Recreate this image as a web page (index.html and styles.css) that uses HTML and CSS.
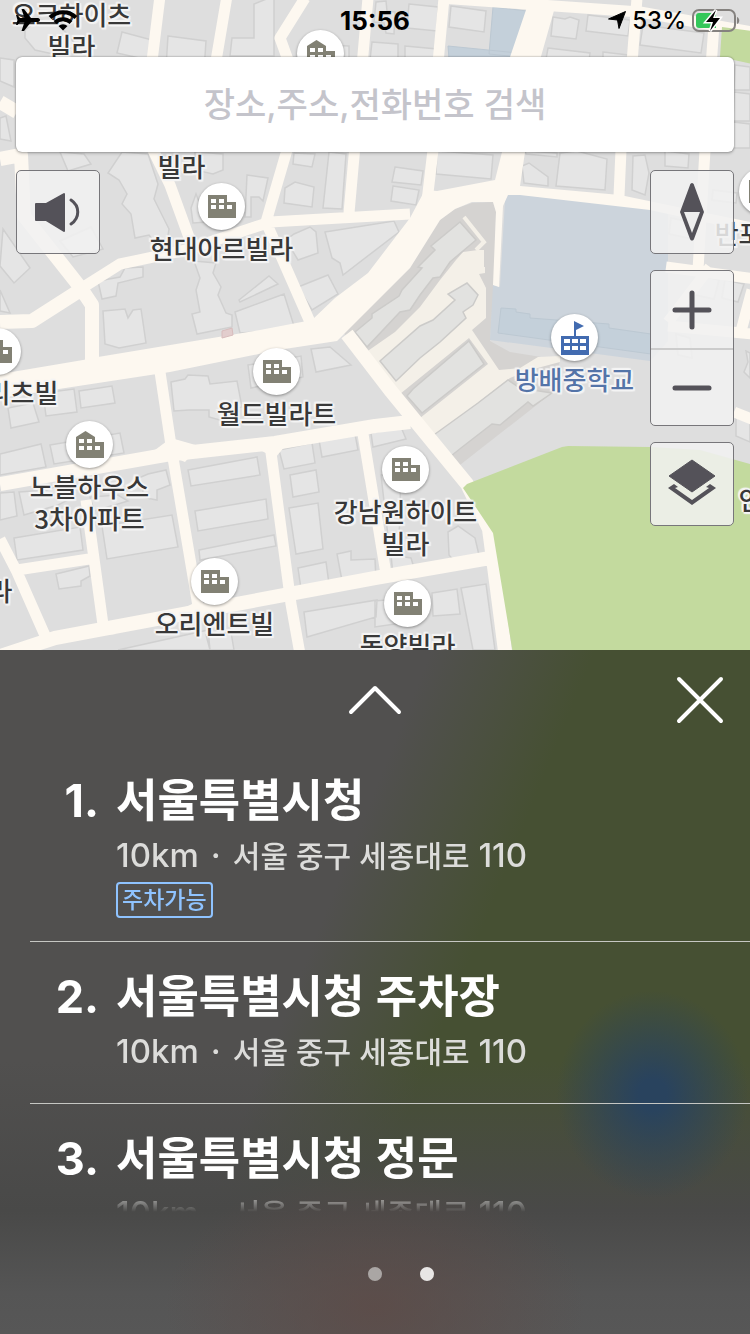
FILE: index.html
```html
<!DOCTYPE html>
<html lang="ko">
<head>
  <meta charset="UTF-8">
  <meta name="viewport" content="width=device-width, initial-scale=1.0">
  <title>장소 검색</title>
  <link rel="stylesheet" href="styles.css">
</head>
<body>
  <!-- shared symbols -->
  <svg class="sprite" width="0" height="0" aria-hidden="true">
    <symbol id="villa" viewBox="0 1 28 24">
      <path fill="#828174" d="M0 1h19v7h9v16H0z"/>
      <path fill="#fff" d="M3 5h5v4H3zM11 5h5v4h-5zM3 11h5v4H3zM11 11h5v4h-5zM19 11h5v4h-5z"/>
    </symbol>
    <symbol id="apartment" viewBox="0 0 28 27">
      <path fill="#828174" d="M0 6l9.500-6L19 6v5h9v16H0z"/>
      <path fill="#fff" d="M3 8h5v4H3zM11 8h5v4h-5zM3 15h5v4H3zM11 15h5v4h-5zM19 15h5v4h-5z"/>
    </symbol>
    <symbol id="school" viewBox="0 0 28 34">
      <path fill="#426bb0" d="M13 0l10 5-8 4v6h13v19H0V15h13z"/>
      <path fill="#fff" d="M3 18h6v4H3zM11 18h6v4h-6zM19 18h6v4h-6zM3 25h6v4H3zM11 25h6v4h-6zM19 25h6v4h-6z"/>
    </symbol>
  </svg>

  <main class="map-area">
    <svg class="map" viewBox="0 0 750 650" preserveAspectRatio="xMidYMin slice" aria-hidden="true">
      <rect width="750" height="650" fill="#dedede"/>

      <g class="buildings">
        <path d="M25 30l14-10 18 2 20 24-24 8-18-4-10-12zM122 32l30 8-4 20-31-7zM168 36l38 5-2 30-38-4zM232 38h22V4l20-8v60h-44zM304 44l45 2v14h-40zM376 2l10-1 1 10 8 1-1 22-8-1-2-10-10-1zM409 4l29 3-1 24-30-3zM372 42l26 2v16h-28zM405 46l32 3v10h-32zM451 6l35 5-2 21-35-5z"/>
        <path d="M553 17l12 2 5-2 9 3-3 19-25-3zM588 15l42 5-2 16-42-5zM548 48l42 5-1 8-43-2zM603 52l25 3v6h-25zM643 25l61 8-3 20-61-8z"/>
        <path d="M0 58l14 2v27l-14-6zM0 118l6-2 5 25-11-2zM60 152l24 2 7 10-23 7zM122 152l26 2 10 30-4 15 15 30-4 26-16-20-14 3-4-24-9-10 5-10-8-14-11-7zM195 152l28 2v16l-10 4-18-4zM247 175l21 3-5 23-4-4-8 0 0 20-6 0zM196 194l-5 14 2 15 14-1zM294 153l21 1-3 13-19-3zM285 188l10-6 19 5-2 20-28-4zM329 152l17 2-4 55-19-1z"/>
        <path d="M60 241l31-14 12 22-30 8zM3 229l27 39-16 15-14-17zM0 290l10 23-10-2zM98 281l22-4 5-9 18-1v10l-25 6-2 13-14 3zM103 311l22-2 3 9 5-8 8-1 5 34-27 5-14-4zM194 261l22 2-3 10 8 14-3 8 8 18 6 2v12l-35 7-5-20 8-2-4-22 4-12zM294 234l16-7 6 5 2 21-20 7-12-20zM239 300l30-24 9 8-21 10-17 8zM298 287l30-12 10 19-26 16zM235 312l49-18 10 32-18 5-36 2zM325 232l69-11 5 11-56 43-3-12-8-5z"/>
        <path d="M395 167l28 4-2 14-29-3zM393 186l26 4-3 15-25-4zM437 151l56 4-2 24-55-5zM525 151l32 2v4l-31-3zM522 166l7-3 19 14v9l-24-3zM560 153l17-2 30 8-2 31-49-4zM633 156l12-1 4 18-4 22-13-5z"/>
        <path d="M665 151l24 3-1 14-23-2zM735 65l15 2v23h-16zM734 92l16 2v27h-17zM733 122l17 2v24h-18zM713 190l24 3-1 10-24-3zM671 218l24 5-2 16-24-5zM699 275l20 5-5 19-19-4zM725 280l19 4-6 18-16-4zM676 334l14 4 2 20-14-3zM746 351l4 2v25l-6-6 4-10zM736 417l14 5v20l-14-6z"/>
        <path d="M8 408l25-5 6 19-28 6zM43 393l31-4 3 23-31 4zM79 391l33-5 3 17-34 5zM0 454l41-10 5 23-46 8zM50 445l70-12 4 20-70 11zM148 474l18-4 4 15-13 5v10l-16-3 3-9-10-8zM0 493l14-1 3 24-17 4zM19 492l28-2 12-5 9 15-10 5-34 10zM90 497l28-2 10 6-34 10zM14 538l66-11 3 23-66 10zM102 526l70-11 6 32-71 12zM56 574l33-8 1 10-9 5v5l-22 3z"/>
        <path d="M171 382l14-3 3-4 20 1 2 8 27-3 5 26-15 3v12l-18-5v-7h-20l-15 1zM248 365l53-9 2 21-52 11zM311 349l19-2 21 18-35 7zM188 470l69-13 3 18-69 11zM195 511l71-12 2 20-70 12zM199 550l75-15 2 11-76 14zM279 450l33-7 3 20-31 6zM319 440l36-6 3 16-36 7zM290 475l26-5 3 22-26 5zM289 508l29-5 5 46-27 5zM298 568l28-6 3 22-28 5zM337 554l14-3v9l24-1 1 22-33 5zM118 650l90-20 2 20zM304 612l73-12-1 17-69 20zM371 433l30-6 5 12-33 8zM381 475l20-4-2 70-10 4zM448 532l10-6 17 12 4 17-18 14-12-14zM391 555l20 3 4 13-22 4zM432 593l25-4 3 25-27 2zM461 588l25-4 9 66h-22zM375 601l40-4v24l-40 6zM206 635l25-3 3 18h-24z"/>
      </g>

      <!-- apartment complex -->
      <path fill="#d5d3d1" d="M344 333L410 268L440 220L455 209L472 203L493 202L496 212L494 285L490 341L510 352L560 360L552 393L451 472z"/>
      <path fill="#f4f0e8" d="M362 355L395 332L420 307L440 280L456 260L463 252L478 250L484 250V267H485V273L479 274L486 288V318L472 330L499 370L520 368L538 357L560 356V362L530 370L510 378L432 438L415 422L488 364L469 338L400 394L385 385L371 365z"/>
      <path fill="none" stroke="#f4f0e8" stroke-width="4" d="M464 217l20 25-8 8"/>
      <g class="blocks">
        <path d="M355 332L372 318V314L399 296L402 290L422 268L418 267L435 250L431 246L460 222L476 240L450 262L440 277L433 278L420 295L410 310L400 312L367 347z"/>
        <path d="M380 361L420 326L433 320L455 300L448 294L467 283L478 295L473 305L463 312L466 318L440 342L420 358L396 381z"/>
        <path d="M407 396L413 389L469 341L484 364L422 413z"/>
        <path d="M431 437L478 403L508 380L520 388L552 393L533 406L528 402L500 425L492 424L461 448L446 460z"/>
      </g>

      <!-- school grounds -->
      <path fill="#ccd4dc" d="M505 195h18l112 11 33 7v128l-18 20-160-21 3-55 7 2 5-87z"/>
      <path fill="#c4d0da" stroke="#bcc8d2" d="M501 308l15 1v3l14 2v4l79 6v4l42 6v20l-153-21zM493 7l34 4-8 46-30-3zM448 46l70 7-1 8-68-2z"/>

      <g class="roads">
        <path d="M0 374L83 360L98 357L260 330L312 320L335 298L368 273L410 218L425 190L437 191L495 180L502 152L510 57L527 7H555L540 60L525 152L520 186L620 195L750 222V232L650 210L520 195H508L503 206L499 287L493 285L496 212L493 202H472L455 209L440 220L410 268L344 334L337 341L278 350L170 372L0 398z"/>
      </g>
      <g class="lines">
        <path class="w14" d="M347 334l43 56 77 94 22 45 8 60 9 70M0 484l165-29 110-12 100-17 35-4M0 656l55-18 320-60 115-20M92 360v-55l-12-18-56-71-3-61-21 4M0 322l32-1 50-32M0 102l17 10"/>
        <path class="w12" d="M160 372l12 80 27 160M270 445l21 159 9 50M362 428l25 152M86 500l18 132M0 539l17 33 30 68M17 570l72-11M160-4l-8 65M227-4l-11 65M152 148l18 37 20 55M305-2l-25 40 8 22M287 150l-21 72 44 100M82 288l38-24 66-14 84-28 140-8M368-2l-19 215M444-2l-6 65M433 150l-7 60M621 150l-2 46M637-2l-5 65M714 25l-9 125-7 120M440-2l200 14 112 20M666 267l90 12M668 326l85 8M710 267l-42 55M752 290l-12 45M734 412l20 8"/>
      </g>
      <path class="road-fill" d="M155 450l16-12 28 8-14 16zM260 450l15 8 12-14zM184 608l12-6 12 8-12 10zM93 636l11-12 12 10z"/>

      <!-- park -->
      <path fill="#c3da9e" d="M463 488l4-4 95-37 6-1 82 1 50 3 50 14v190H513l-20-121zM722 27l30 4v33l-32-7z"/>
      <path fill="#e2cdcd" stroke="#d8bcbc" d="M222 331l10-3 1 7-11 3z"/>
    </svg>

    <div class="pin oak"><span class="label">오크하이츠<br>빌라</span></div>
    <div class="pin top-apt"><span class="marker"><svg width="28" height="27"><use href="#apartment"/></svg></span></div>
    <div class="pin villa"><span class="label">빌라</span></div>
    <div class="pin hyundai"><span class="marker"><svg width="28" height="24"><use href="#villa"/></svg></span><span class="label">현대아르빌라</span></div>
    <div class="pin ritz"><span class="marker"><svg width="28" height="24"><use href="#villa"/></svg></span></div>
    <div class="pin ritz-name"><span class="label">리츠빌</span></div>
    <div class="pin world"><span class="marker"><svg width="28" height="24"><use href="#villa"/></svg></span><span class="label">월드빌라트</span></div>
    <div class="pin noble"><span class="marker"><svg width="28" height="27"><use href="#apartment"/></svg></span><span class="label">노블하우스<br>3차아파트</span></div>
    <div class="pin gangnam"><span class="marker"><svg width="28" height="24"><use href="#villa"/></svg></span><span class="label">강남원하이트<br>빌라</span></div>
    <div class="pin orient"><span class="marker"><svg width="28" height="24"><use href="#villa"/></svg></span><span class="label">오리엔트빌</span></div>
    <div class="pin dongyang"><span class="marker"><svg width="28" height="24"><use href="#villa"/></svg></span><span class="label">동양빌라</span></div>
    <div class="pin bangbae"><span class="marker"><svg width="28" height="34"><use href="#school"/></svg></span><span class="label">방배중학교</span></div>
    <div class="pin banpo"><span class="marker"><svg width="28" height="24"><use href="#villa"/></svg></span><span class="label">반포빌라</span></div>
    <div class="pin left-name"><span class="label">라</span></div>
    <div class="pin right-name"><span class="label">인</span></div>

    <div class="overlay">
      <div class="status">
        <div class="status-left">
          <svg width="24" height="22" viewBox="0 0 24 22"><path d="M24 11c0-1.500-1.500-2-3-2h-6L8 0H5.500l3 9H4L1.500 6H0l1.500 5L0 16h1.500L4 13h4.500l-3 9H8l7-9h6c1.500 0 3-.500 3-2z"/></svg>
          <svg width="30" height="22" viewBox="0 0 30 22"><path fill="none" stroke="#000" stroke-width="4" d="M2 8.500a18.500 18.500 0 0 1 26 0M7 13.500a11.500 11.500 0 0 1 16 0"/><path d="M15 21.500l-4.500-4.500a6.500 6.500 0 0 1 9 0z"/></svg>
        </div>
        <time class="clock">15:56</time>
        <div class="status-right">
          <svg width="18" height="18" viewBox="0 0 18 18"><path d="M17.500.500L11 17.500 9.500 9 .500 8z" stroke="#000" stroke-linejoin="round"/></svg>
          <span>53%</span>
          <svg width="48" height="30" viewBox="0 0 48 30"><rect x="1" y="5" width="42" height="21" rx="6" fill="none" stroke="#85827f" stroke-width="2"/><path fill="#85827f" d="M45 12c3 1 3 6 0 7z"/><path fill="#34c759" d="M7 8h17v15H7a3 3 0 0 1-3-3v-9a3 3 0 0 1 3-3z"/><path class="bolt" d="M24 5L14 17h7l-3 9 10-13h-7z"/></svg>
        </div>
      </div>

      <form class="search">
        <input type="text" aria-label="장소 검색" placeholder="장소,주소,전화번호 검색">
      </form>

      <div class="controls">
        <button class="control" type="button" aria-label="음성 안내">
          <svg width="46" height="40" viewBox="0 0 46 40"><path fill="#545259" stroke="#545259" stroke-width="2" stroke-linejoin="round" d="M1 12h10L29 2v37L11 28H1z"/><path fill="none" stroke="#545259" stroke-width="3" stroke-linecap="round" d="M36 8c9 6 9 18 0 24"/></svg>
        </button>
        <div class="control-column">
          <button class="control" type="button" aria-label="나침반">
            <svg width="24" height="58" viewBox="0 0 24 58"><path fill="#545259" d="M12 0c1 0 2 1 2 2l10 27-10 27c-1 2-3 2-4 0L0 29 10 2c0-1 1-2 2-2z"/><path fill="#eee" d="M4 29h16l-8 21z"/></svg>
          </button>
          <div class="zoom">
            <button type="button" aria-label="확대"><svg width="40" height="40" viewBox="0 0 40 40"><path stroke="#545259" stroke-width="5" stroke-linecap="round" d="M3 20h34M20 3v34"/></svg></button>
            <button type="button" aria-label="축소"><svg width="40" height="40" viewBox="0 0 40 40"><path stroke="#545259" stroke-width="5" stroke-linecap="round" d="M3 20h34"/></svg></button>
          </div>
          <button class="control" type="button" aria-label="지도 레이어">
            <svg width="48" height="50" viewBox="0 0 48 50"><path fill="#545259" stroke="#545259" stroke-linejoin="round" d="M24 1l23 16-23 16L1 17z"/><path fill="#545259" d="M6 25L0 29l24 17 24-17-6-4-4 3 3 1-17 12L7 29l3-1z"/></svg>
          </button>
        </div>
      </div>
    </div>
  </main>

  <section class="results" aria-label="검색 결과">
    <header class="results-head">
      <button class="expand" type="button" aria-label="펼치기"><svg width="54" height="32" viewBox="0 0 54 32"><path d="M3 28L27 4l24 24"/></svg></button>
      <button class="close" type="button" aria-label="닫기"><svg width="48" height="48" viewBox="0 0 48 48"><path d="M3 3l42 42M45 3L3 45"/></svg></button>
    </header>
    <ol class="list">
      <li class="item">
        <span class="number">1.</span>
        <div class="place">
          <h2><a href="#">서울특별시청</a></h2>
          <p><span>10km</span><span>·</span><span><span class="address">서울 중구 세종대로</span> 110</span></p>
          <span class="tag">주차가능</span>
        </div>
      </li>
      <li class="item">
        <span class="number">2.</span>
        <div class="place">
          <h2><a href="#">서울특별시청 주차장</a></h2>
          <p><span>10km</span><span>·</span><span><span class="address">서울 중구 세종대로</span> 110</span></p>
        </div>
      </li>
      <li class="item">
        <span class="number">3.</span>
        <div class="place">
          <h2><a href="#">서울특별시청 정문</a></h2>
          <p><span>10km</span><span>·</span><span><span class="address">서울 중구 세종대로</span> 110</span></p>
        </div>
      </li>
    </ol>
    <nav class="pages" aria-label="페이지">
      <button type="button" aria-label="1 페이지"></button>
      <button class="current" type="button" aria-label="2 페이지"></button>
    </nav>
  </section>
</body>
</html>
```

FILE: styles.css
```css
* { margin: 0; padding: 0; box-sizing: border-box; }
body {
  min-height: 100vh;
  display: flex;
  flex-direction: column;
  font-family: Inter, "Noto Sans CJK KR", sans-serif;
  color: #000;
}
button {
  border: none;
  background: none;
  display: flex;
  align-items: center;
  justify-content: center;
  cursor: pointer;
}
svg { display: block; }
.sprite { position: absolute; }

/* map */
.map-area {
  flex: 1;
  position: relative;
  overflow: hidden;
  background: #dedede;
}
.map {
  position: absolute;
  inset: 0;
  width: 100%;
  height: 100%;
}
.buildings { fill: #e5e5e5; stroke: #d0d0d0; stroke-width: 1.5; }
.blocks { fill: #e2e2e0; stroke: #cccbc9; stroke-width: 1.5; }
.roads, .road-fill { fill: #fdf8f0; }
.lines { fill: none; stroke: #fdf8f0; stroke-linejoin: round; }
.w14 { stroke-width: 14px; }
.w12 { stroke-width: 11px; }

.pin {
  position: absolute;
  width: 201px;
  margin-left: -100px;
  display: flex;
  flex-direction: column;
  align-items: center;
  gap: 2px;
}
.marker {
  width: 47px;
  height: 47px;
  border-radius: 50%;
  background: #fff;
  box-shadow: 0 1px 3px rgba(0, 0, 0, .4);
  display: flex;
  align-items: center;
  justify-content: center;
}
.label {
  font-family: "Noto Sans CJK KR", sans-serif;
  font-size: 26px;
  line-height: 32px;
  font-weight: 500;
  text-align: center;
  color: #383838;
  text-shadow: 0 0 2px #fff, 2px 0 1px #f4f4f4, -2px 0 1px #f4f4f4, 0 2px 1px #f4f4f4, 0 -2px 1px #f4f4f4, 2px 2px 1px #f4f4f4, -2px -2px 1px #f4f4f4;
}
.oak { left: 71px; top: -2px; }
.top-apt { left: 320px; top: 30px; }
.villa { left: 181px; top: 150px; }
.hyundai { left: 221px; top: 183px; }
.ritz { left: -3px; top: 328px; }
.ritz-name { left: 22px; top: 376px; }
.world { left: 276px; top: 348px; }
.noble { left: 89px; top: 421px; }
.gangnam { left: 405px; top: 446px; }
.orient { left: 214px; top: 558px; }
.dongyang { left: 407px; top: 580px; }
.bangbae { left: 574px; top: 314px; }
.bangbae .label { color: #5474a8; }
.banpo { left: 762px; top: 168px; }
.left-name { left: 0; top: 574px; }
.right-name { left: 750px; top: 483px; }

.overlay {
  position: relative;
  padding: 0 16px 24px;
}
.status {
  height: 40px;
  display: grid;
  grid-template-columns: 1fr auto 1fr;
  align-items: center;
  font-size: 24px;
}
.status-left { display: flex; gap: 8px; }
.clock { font-size: 26px; font-weight: 700; }
.status-right {
  display: flex;
  align-items: center;
  justify-content: flex-end;
  gap: 6px;
  font-weight: 500;
  margin-right: -6px;
}
.bolt {
  fill: #000;
  stroke: #fff;
  stroke-width: 3px;
  paint-order: stroke;
}
.search { margin: 17px 0 18px; }
.search input {
  display: block;
  width: 100%;
  height: 95px;
  border: none;
  border-radius: 6px;
  background: #fff;
  box-shadow: 0 0 2px rgba(0, 0, 0, .5), 0 2px 3px rgba(0, 0, 0, .15);
  font-family: Inter, "Noto Sans CJK KR", sans-serif;
  font-size: 34px;
  font-weight: 500;
  text-align: center;
}
.search input::placeholder { color: #c4c4cb; opacity: 1; }

.controls {
  display: flex;
  justify-content: space-between;
  align-items: flex-start;
}
.control-column { display: flex; flex-direction: column; gap: 16px; }
.control, .zoom {
  width: 84px;
  border: 1px solid #77767a;
  border-radius: 5px;
  background: rgba(241, 241, 241, .86);
}
.control { height: 84px; }
.zoom button { width: 100%; height: 77px; }
.zoom button + button { border-top: 2px solid #ccc; }

/* results panel */
.results {
  color: #fff;
  background:
    radial-gradient(ellipse 210px 140px at 50% 96%, rgba(94, 74, 70, .75), transparent),
    radial-gradient(ellipse 96px 104px at 87% 65%, #29435e 15%, transparent),
    linear-gradient(transparent 60%, #494948 82%, #555 94%, #575757),
    linear-gradient(112deg, #51504f 42%, #465033 58%);
}
.results-head {
  display: grid;
  grid-template-columns: 1fr auto 1fr;
  align-items: center;
  padding: 26px 26px 22px;
}
.results-head path {
  fill: none;
  stroke: #fff;
  stroke-width: 4;
  stroke-linecap: round;
  stroke-linejoin: round;
}
.expand { grid-column: 2; }
.close { justify-self: end; }
.list {
  height: 466px;
  margin-left: 30px;
  overflow: hidden;
  list-style: none;
  -webkit-mask-image: linear-gradient(#000 95%, transparent);
  mask-image: linear-gradient(#000 95%, transparent);
}
.item {
  display: grid;
  grid-template-columns: 69px 1fr;
  gap: 17px;
  padding: 27px 0 25px;
  border-bottom: 1px solid #c6c7c3;
}
.item:first-child { padding-bottom: 23px; }
.number {
  text-align: right;
  font-size: 45px;
  line-height: 56px;
  font-weight: 700;
}
h2 { font-size: 45px; line-height: 56px; font-weight: 600; }
h2 a { color: inherit; text-decoration: none; }
.place p {
  display: flex;
  gap: 12px;
  font-size: 33px;
  line-height: 52px;
  font-weight: 500;
  color: #dcdcda;
}
.address { font-size: 30px; }
.tag {
  display: block;
  width: max-content;
  padding: 0 4px;
  border: 2px solid #8fc3ff;
  border-radius: 4px;
  font-size: 23px;
  line-height: 32px;
  font-weight: 500;
  color: #8fc3ff;
}
.pages {
  display: flex;
  justify-content: center;
  gap: 38px;
  padding: 55px 0 53px 52px;
}
.pages button {
  width: 14px;
  height: 14px;
  border-radius: 50%;
  background: #aaa6a4;
}
.pages .current { background: #e8e6e5; }
```
